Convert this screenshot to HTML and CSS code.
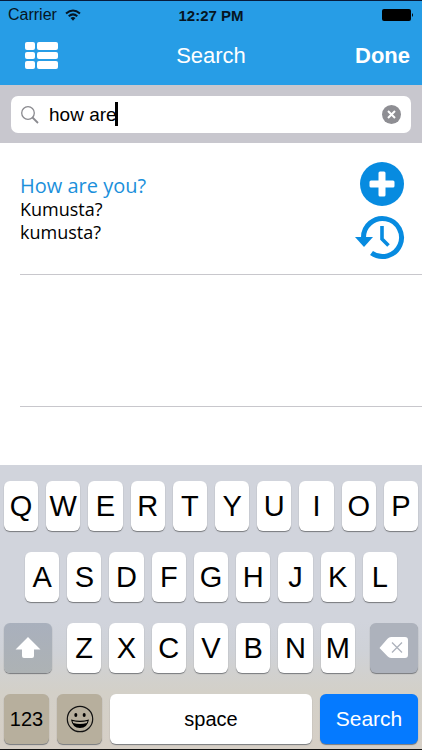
FILE: index.html
```
<!DOCTYPE html>
<html lang="en">
<head>
<meta charset="utf-8">
<meta name="viewport" content="width=device-width, initial-scale=1">
<title>Search</title>
<link rel="stylesheet" href="styles.css">
</head>
<body>
<div class="app">
  <header class="header">
    <div class="status">
      <div class="carrier">
        <span>Carrier</span>
        <svg width="16" height="12" viewBox="0 0 16 12" aria-hidden="true"><g fill="none" stroke="#061522" stroke-width="2"><path d="M1 4.5Q8-1.5 15 4.5"/><path d="M3.700 7.200Q8 3.600 12.300 7.200"/></g><path d="M5.500 9Q8 7 10.500 9L8 11.800Z" fill="#061522"/></svg>
      </div>
      <span class="clock">12:27 PM</span>
      <svg class="battery" width="32" height="12" viewBox="0 0 32 12" aria-hidden="true"><rect width="29" height="12" rx="2"/><path d="M30 4q2 2 0 4z"/></svg>
    </div>
    <nav class="nav">
      <button class="menu" aria-label="List"><svg width="34" height="28" viewBox="0 0 34 28" fill="#fff"><rect x="0" y="0" width="10" height="8" rx="2"/><rect x="12" y="0" width="21" height="8" rx="2"/><rect x="0" y="10" width="10" height="7" rx="2"/><rect x="12" y="10" width="21" height="7" rx="2"/><rect x="0" y="19" width="10" height="8" rx="2"/><rect x="12" y="19" width="21" height="8" rx="2"/></svg></button>
      <h1 class="title">Search</h1>
      <button class="done">Done</button>
    </nav>
  </header>

  <form class="searchbar">
    <div class="field">
      <svg width="18" height="18" viewBox="0 0 18 18" fill="none" stroke="#8a8a8f" aria-hidden="true"><circle cx="7" cy="7" r="6.300" stroke-width="1.300"/><path d="M11.500 11.500L17 17" stroke-width="1.800"/></svg>
      <input class="query" type="text" aria-label="Search phrases" value="how are">
      <span class="caret"></span>
      <button class="clear" type="button" aria-label="Clear"><svg width="19" height="19" viewBox="0 0 19 19"><circle cx="9.500" cy="9.500" r="9.500" fill="#8e8e93"/><path d="M6 6l7 7M13 6l-7 7" stroke="#fff" stroke-width="2"/></svg></button>
    </div>
  </form>

  <main class="results">
    <article class="result">
      <div class="phrase">
        <h2>How are you?</h2>
        <p>Kumusta?</p>
        <p>kumusta?</p>
      </div>
      <div class="actions">
        <button aria-label="Add"><svg width="50" height="46" viewBox="0 0 50 46"><circle cx="27" cy="22" r="22" fill="#078be0"/><g fill="#fff"><rect x="23.500" y="9.500" width="7" height="25" rx="1.500"/><rect x="14.500" y="18.500" width="25" height="7" rx="1.500"/></g></svg></button>
        <button aria-label="History"><svg width="50" height="46" viewBox="0 0 50 46" fill="none" stroke="#078be0"><path d="M8.500 23A19 19 0 1 1 16.500 38" stroke-width="5"/><path d="M0 22H18L9 32Z" fill="#078be0" stroke="none"/><path d="M27 11V24L33.500 30.500" stroke-width="3.600"/></svg></button>
      </div>
    </article>
    <div class="blank"></div>
  </main>

  <section class="keyboard" aria-label="Keyboard">
    <div class="row"><button>Q</button><button>W</button><button>E</button><button>R</button><button>T</button><button>Y</button><button>U</button><button>I</button><button>O</button><button>P</button></div>
    <div class="row home"><button>A</button><button>S</button><button>D</button><button>F</button><button>G</button><button>H</button><button>J</button><button>K</button><button>L</button></div>
    <div class="row lower">
      <button class="side shift" aria-label="Shift"><svg width="26" height="22" viewBox="0 0 26 22"><path d="M13 0L25.500 12.500H19V19q0 2-2 2H9q-2 0-2-2V12.500H.500Z" fill="#fff"/></svg></button>
      <div class="row letters"><button>Z</button><button>X</button><button>C</button><button>V</button><button>B</button><button>N</button><button>M</button></div>
      <button class="side" aria-label="Delete"><svg width="30" height="22" viewBox="0 0 30 22"><path d="M.500 11L8.500 1.800Q10 0 12 0H26q3 0 3 3V18q0 3-3 3H12q-2 0-3.500-1.800Z" fill="#fff"/><path d="M13 5.500l10 10M23 5.500l-10 10" stroke="#adb2bc" stroke-width="1.300"/></svg></button>
    </div>
    <div class="row">
      <button class="tan">123</button>
      <button class="tan" aria-label="Emoji"><svg width="28" height="28" viewBox="0 0 28 28"><circle cx="14" cy="14" r="12.700" fill="none" stroke="#111" stroke-width="1.200"/><ellipse cx="9.800" cy="10" rx="1.500" ry="2"/><ellipse cx="18.200" cy="10" rx="1.500" ry="2"/><path d="M5 14.500Q14 17 23 14.500Q21.500 23 14 23T5 14.500Z"/><path d="M6.500 16Q14 18 21.500 16L20.800 18Q14 20 7.200 18Z" fill="#b7af9d"/></svg></button>
      <button class="space">space</button>
      <button class="go">Search</button>
    </div>
  </section>
</div>
</body>
</html>
```
FILE: styles.css
```
* { box-sizing: border-box; }
body { margin: 0; background: #fff; color: #000; font-family: "Liberation Sans", Arial, sans-serif; }
button { padding: 0; border: 0; background: none; color: inherit; font: inherit; }
svg { display: block; }
h1, h2, p { margin: 0; font-weight: 400; }

.app { display: flex; flex-direction: column; min-height: 100vh; }

.header { background: #279de6; border-top: 1px solid #071c3c; }
.status { display: grid; grid-template-columns: 1fr auto 1fr; align-items: center; height: 28px; padding: 0 8px; color: #061522; font-size: 16px; }
.carrier { display: flex; align-items: center; gap: 8px; }
.clock { font-weight: 700; font-size: 15px; }
.battery { justify-self: end; }
.nav { display: grid; grid-template-columns: 1fr auto 1fr; align-items: center; height: 56px; padding: 0 12px 2px; color: #fff; }
.menu { justify-self: start; margin-left: 13px; }
.title { font-size: 22px; }
.done { justify-self: end; font-size: 22px; font-weight: 700; }

.searchbar { padding: 11px 11px 10px; background: #c8c7ce; }
.field { position: relative; display: flex; align-items: center; gap: 10px; height: 37px; padding: 0 10px; border-radius: 7px; background: #fff; }
.query { flex: 1; min-width: 0; padding: 0; border: 0; outline: 0; background: none; font: inherit; font-size: 19px; }
.caret { position: absolute; left: 104px; top: 6px; width: 3px; height: 24px; background: #000; }

.results { flex: 1; font-family: "Open Sans", "Noto Sans", sans-serif; }
.result { display: flex; justify-content: space-between; margin-left: 20px; height: 132px; padding: 19px 17px 0 0; border-bottom: 1px solid #c8c7cc; }
.phrase { padding-top: 11px; font-size: 18px; line-height: 23px; }
.phrase h2 { font-size: 20px; line-height: 25px; color: #1b90db; }
.actions { display: flex; flex-direction: column; gap: 7px; }
.blank { height: 132px; margin-left: 20px; border-bottom: 1px solid #c8c7cc; }

.keyboard { display: flex; flex-direction: column; gap: 21px; padding: 16px 4px 5px; border-bottom: 1px solid #111; background: linear-gradient(#d1d4dc 0 55%, #cfd2d8 65%, #d3d0c8 80%, #d6cfc6); }
.row { display: flex; gap: 8px; }
.row button { display: flex; flex: 1 1 0; align-items: center; justify-content: center; height: 50px; border-radius: 6px; background: #fff; box-shadow: 0 1px 1px #77797d; font-size: 29px; }
.home { padding: 0 21px; }
.lower { gap: 15px; }
.letters { flex: 1; }
.row .side { flex: 0 0 48px; background: #adb2bc; }
.row .shift { background: linear-gradient(#a9b0bd, #adb2b4); }
.row .tan { flex: 0 0 45px; background: #b7af9d; font-size: 20px; }
.row .space { font-size: 20px; }
.row .go { flex: 0 0 98px; background: #057aff; color: #fff; font-size: 21px; }
```
